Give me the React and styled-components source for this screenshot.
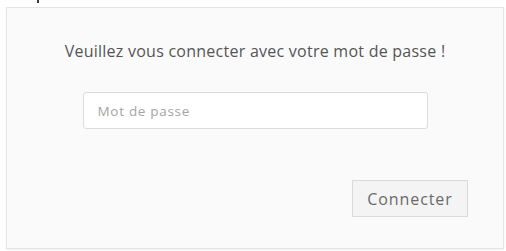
import React from "react";
import styled, { createGlobalStyle } from "styled-components";

const GlobalStyle = createGlobalStyle`
  html, body {
    margin: 0;
    padding: 0;
    background: #ffffff;
  }
  body {
    font-family: "Open Sans", "Noto Sans", sans-serif;
  }
`;

const Page = styled.div`
  width: 506px;
  height: 251px;
  overflow: hidden;
  background: #ffffff;
`;

const TopStrip = styled.div`
  height: 6px;
  padding-left: 37px;
`;

/* the tail of a letter cut by the top edge */
const CutMark = styled.span`
  display: block;
  width: 2px;
  height: 3px;
  background: #3a3a3a;
`;

const Panel = styled.div`
  margin: 1px 2px 0 6px;
  height: 242px;
  box-sizing: border-box;
  background: #fafafa;
  border: 1px solid #e4e4e4;
  box-shadow: 0 1px 2px rgba(0, 0, 0, 0.06);
  display: flex;
  flex-direction: column;
  align-items: center;
  padding-top: 32px;
`;

const Title = styled.p`
  margin: 0;
  font-size: 16px;
  line-height: 22px;
  letter-spacing: 0.25px;
  color: #555555;
`;

const Field = styled.input`
  margin-top: 30px;
  width: 345px;
  height: 37px;
  box-sizing: border-box;
  border: 1px solid #dcdcdc;
  border-radius: 3px;
  background: #ffffff;
  padding: 0 13px 0 14px;
  font-family: "Open Sans", sans-serif;
  font-size: 13.5px;
  letter-spacing: 0.7px;
  color: #555;
  outline: none;
  &::placeholder {
    color: #a4a4a4;
  }
`;

const Actions = styled.div`
  align-self: stretch;
  display: flex;
  justify-content: flex-end;
  padding-right: 35px;
  margin-top: 51px;
`;

const Button = styled.button`
  width: 116px;
  height: 37px;
  box-sizing: border-box;
  border: 1px solid #dadada;
  background: #f4f4f4;
  font-family: "Open Sans", sans-serif;
  font-size: 16px;
  letter-spacing: 0.9px;
  color: #6a6a6a;
  padding: 0;
`;

export default function App() {
  return (
    <Page>
      <GlobalStyle />
      <TopStrip>
        <CutMark />
      </TopStrip>
      <Panel>
        <Title>Veuillez vous connecter avec votre mot de passe !</Title>
        <Field type="password" placeholder="Mot de passe" />
        <Actions>
          <Button>Connecter</Button>
        </Actions>
      </Panel>
    </Page>
  );
}
